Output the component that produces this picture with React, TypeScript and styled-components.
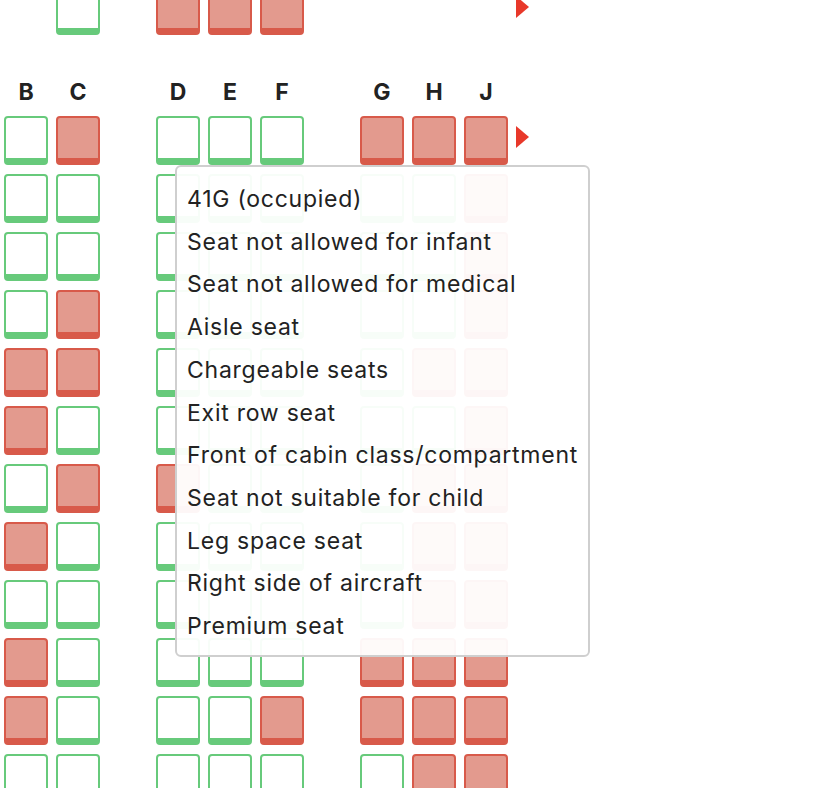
import React from "react";
import styled, { createGlobalStyle, css } from "styled-components";

const GlobalStyle = createGlobalStyle`
  html, body { margin: 0; padding: 0; background: #ffffff; }
  body { font-family: Inter, "Noto Sans", "Liberation Sans", sans-serif; color: #222; overflow: hidden; }
`;

type Kind = "free" | "taken" | "none";

const Page = styled.div`
  position: relative;
  width: 820px;
  height: 788px;
  overflow: hidden;
`;

const Cabin = styled.div`
  display: flex;
  flex-direction: column;
  gap: 9px;
  padding-left: 4px;
  margin-top: -14px;
`;

const Row = styled.div`
  display: flex;
  gap: 8px;
  align-items: flex-start;
`;

const LabelRow = styled.div`
  display: flex;
  gap: 8px;
  margin: 36px 0 3px;
  height: 24px;
  align-items: center;
`;

const Label = styled.div`
  width: 44px;
  text-align: center;
  font-weight: 700;
  font-size: 23px;
  line-height: 24px;
  color: #222;
`;

const Aisle = styled.div`
  width: 40px;
  flex: none;
`;

const Seat = styled.div<{ $kind: Kind }>`
  box-sizing: border-box;
  width: 44px;
  height: 49px;
  flex: none;
  border-radius: 4px;
  border: 2px solid;
  border-bottom-width: 7px;
  ${({ $kind }) =>
    $kind === "free"
      ? css`
          border-color: #67ca7b;
          background: #ffffff;
        `
      : $kind === "taken"
      ? css`
          border-color: #d85a4a;
          background: #e39a8e;
        `
      : css`
          visibility: hidden;
        `}
`;

const ExitArrow = styled.div`
  width: 0;
  height: 0;
  margin-top: 10px;
  border-top: 11.5px solid transparent;
  border-bottom: 11.5px solid transparent;
  border-left: 13px solid #e8382a;
`;

const Tooltip = styled.div`
  position: absolute;
  left: 175px;
  top: 165px;
  width: 415px;
  height: 492px;
  box-sizing: border-box;
  background: rgba(255, 255, 255, 0.95);
  border: 2px solid #cfcfcf;
  border-radius: 6px;
  padding: 11px 10px 6px 10px;
`;

const TipLine = styled.div`
  font-size: 23px;
  letter-spacing: 0.75px;
  line-height: 42.7px;
  color: #222;
  white-space: nowrap;
`;

const f: Kind = "free";
const t: Kind = "taken";
const n: Kind = "none";

type RowData = { left: Kind[]; mid: Kind[]; right: Kind[]; exit?: boolean };

const rows: RowData[] = [
  { left: [n, f], mid: [t, t, t], right: [n, n, n], exit: true },
];

const seatRows: RowData[] = [
  { left: [f, t], mid: [f, f, f], right: [t, t, t], exit: true },
  { left: [f, f], mid: [f, f, f], right: [f, f, t] },
  { left: [f, f], mid: [f, f, f], right: [f, f, t] },
  { left: [f, t], mid: [f, f, f], right: [f, f, t] },
  { left: [t, t], mid: [f, f, f], right: [f, t, t] },
  { left: [t, f], mid: [f, f, f], right: [f, f, t] },
  { left: [f, t], mid: [t, f, f], right: [f, t, t] },
  { left: [t, f], mid: [f, f, f], right: [f, t, t] },
  { left: [f, f], mid: [f, f, f], right: [f, t, t] },
  { left: [t, f], mid: [f, f, f], right: [t, t, t] },
  { left: [t, f], mid: [f, f, t], right: [t, t, t] },
  { left: [f, f], mid: [f, f, f], right: [f, t, t] },
];

const tipLines = [
  "41G (occupied)",
  "Seat not allowed for infant",
  "Seat not allowed for medical",
  "Aisle seat",
  "Chargeable seats",
  "Exit row seat",
  "Front of cabin class/compartment",
  "Seat not suitable for child",
  "Leg space seat",
  "Right side of aircraft",
  "Premium seat",
];

const SeatRow: React.FC<{ data: RowData }> = ({ data }) => (
  <Row>
    {data.left.map((k, i) => (
      <Seat key={"l" + i} $kind={k} />
    ))}
    <Aisle />
    {data.mid.map((k, i) => (
      <Seat key={"m" + i} $kind={k} />
    ))}
    <Aisle />
    {data.right.map((k, i) => (
      <Seat key={"r" + i} $kind={k} />
    ))}
    {data.exit && <ExitArrow />}
  </Row>
);

export default function App() {
  return (
    <Page>
      <GlobalStyle />
      <Cabin>
        {rows.map((r, i) => (
          <SeatRow key={"top" + i} data={r} />
        ))}
        <LabelRow>
          <Label>B</Label>
          <Label>C</Label>
          <Aisle />
          <Label>D</Label>
          <Label>E</Label>
          <Label>F</Label>
          <Aisle />
          <Label>G</Label>
          <Label>H</Label>
          <Label>J</Label>
        </LabelRow>
        {seatRows.map((r, i) => (
          <SeatRow key={i} data={r} />
        ))}
      </Cabin>
      <Tooltip>
        {tipLines.map((l) => (
          <TipLine key={l}>{l}</TipLine>
        ))}
      </Tooltip>
    </Page>
  );
}
